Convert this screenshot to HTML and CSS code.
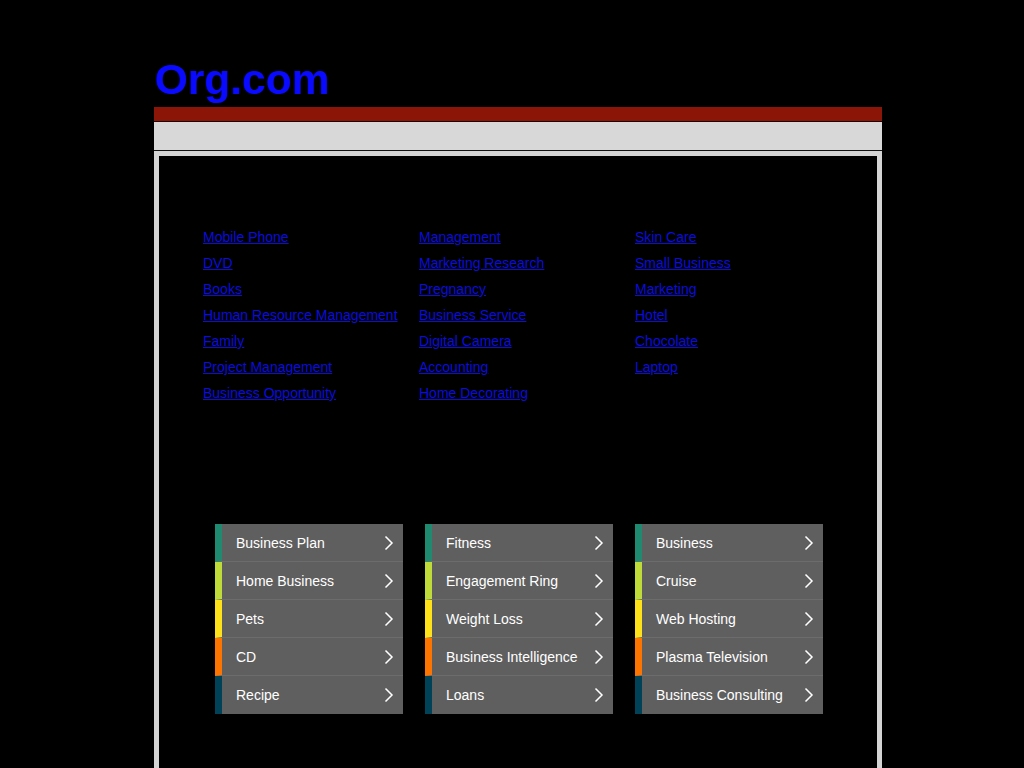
FILE: index.html
```html
<!DOCTYPE html>
<html>
<head>
<meta charset="utf-8">
<title>Org.com</title>
<link rel="stylesheet" href="styles.css">
</head>
<body>
<div class="wrap">
  <div class="logo">Org.com</div>
  <div class="redbar"></div>
  <div class="graybar"></div>
  <div class="box">
    <div class="links">
      <ul class="col">
        <li><a href="#">Mobile Phone</a></li>
        <li><a href="#">DVD</a></li>
        <li><a href="#">Books</a></li>
        <li><a href="#">Human Resource Management</a></li>
        <li><a href="#">Family</a></li>
        <li><a href="#">Project Management</a></li>
        <li><a href="#">Business Opportunity</a></li>
      </ul>
      <ul class="col">
        <li><a href="#">Management</a></li>
        <li><a href="#">Marketing Research</a></li>
        <li><a href="#">Pregnancy</a></li>
        <li><a href="#">Business Service</a></li>
        <li><a href="#">Digital Camera</a></li>
        <li><a href="#">Accounting</a></li>
        <li><a href="#">Home Decorating</a></li>
      </ul>
      <ul class="col">
        <li><a href="#">Skin Care</a></li>
        <li><a href="#">Small Business</a></li>
        <li><a href="#">Marketing</a></li>
        <li><a href="#">Hotel</a></li>
        <li><a href="#">Chocolate</a></li>
        <li><a href="#">Laptop</a></li>
      </ul>
    </div>
    <div class="menus">
      <ul class="menu">
        <li class="c1"><a href="#">Business Plan</a><svg class="chev" viewBox="0 0 10 16"><path d="M1.5 1.5 L8 8 L1.5 14.5" /></svg></li>
        <li class="c2"><a href="#">Home Business</a><svg class="chev" viewBox="0 0 10 16"><path d="M1.5 1.5 L8 8 L1.5 14.5" /></svg></li>
        <li class="c3"><a href="#">Pets</a><svg class="chev" viewBox="0 0 10 16"><path d="M1.5 1.5 L8 8 L1.5 14.5" /></svg></li>
        <li class="c4"><a href="#">CD</a><svg class="chev" viewBox="0 0 10 16"><path d="M1.5 1.5 L8 8 L1.5 14.5" /></svg></li>
        <li class="c5"><a href="#">Recipe</a><svg class="chev" viewBox="0 0 10 16"><path d="M1.5 1.5 L8 8 L1.5 14.5" /></svg></li>
      </ul>
      <ul class="menu">
        <li class="c1"><a href="#">Fitness</a><svg class="chev" viewBox="0 0 10 16"><path d="M1.5 1.5 L8 8 L1.5 14.5" /></svg></li>
        <li class="c2"><a href="#">Engagement Ring</a><svg class="chev" viewBox="0 0 10 16"><path d="M1.5 1.5 L8 8 L1.5 14.5" /></svg></li>
        <li class="c3"><a href="#">Weight Loss</a><svg class="chev" viewBox="0 0 10 16"><path d="M1.5 1.5 L8 8 L1.5 14.5" /></svg></li>
        <li class="c4"><a href="#">Business Intelligence</a><svg class="chev" viewBox="0 0 10 16"><path d="M1.5 1.5 L8 8 L1.5 14.5" /></svg></li>
        <li class="c5"><a href="#">Loans</a><svg class="chev" viewBox="0 0 10 16"><path d="M1.5 1.5 L8 8 L1.5 14.5" /></svg></li>
      </ul>
      <ul class="menu">
        <li class="c1"><a href="#">Business</a><svg class="chev" viewBox="0 0 10 16"><path d="M1.5 1.5 L8 8 L1.5 14.5" /></svg></li>
        <li class="c2"><a href="#">Cruise</a><svg class="chev" viewBox="0 0 10 16"><path d="M1.5 1.5 L8 8 L1.5 14.5" /></svg></li>
        <li class="c3"><a href="#">Web Hosting</a><svg class="chev" viewBox="0 0 10 16"><path d="M1.5 1.5 L8 8 L1.5 14.5" /></svg></li>
        <li class="c4"><a href="#">Plasma Television</a><svg class="chev" viewBox="0 0 10 16"><path d="M1.5 1.5 L8 8 L1.5 14.5" /></svg></li>
        <li class="c5"><a href="#">Business Consulting</a><svg class="chev" viewBox="0 0 10 16"><path d="M1.5 1.5 L8 8 L1.5 14.5" /></svg></li>
      </ul>
    </div>
  </div>
</div>
</body>
</html>
```
FILE: styles.css
```css
html, body {
  margin: 0;
  padding: 0;
  background: #000;
  font-family: "Liberation Sans", Arial, sans-serif;
}
.wrap {
  width: 728px;
  margin-left: 154px;
  padding-top: 56px;
}
.logo {
  font-size: 42.5px;
  font-weight: bold;
  color: #0a0aff;
  line-height: 48px;
  height: 51px;
  padding-left: 1px;
}
.redbar {
  height: 14px;
  background: #8b1506;
  border-bottom: 1px solid #1a0500;
}
.graybar {
  height: 28px;
  background: #d8d8d8;
  border-bottom: 1px solid #111;
}
.box {
  border: 5px solid #d4d4d4;
  background: #000;
  height: 700px;
}
.links {
  display: flex;
  padding: 72px 0 0 44px;
}
.col {
  list-style: none;
  margin: 0;
  padding: 0;
  width: 216px;
}
.col li {
  height: 26px;
  line-height: 18px;
  font-size: 14px;
}
.col a {
  color: #0c0cdd;
  text-decoration: underline;
}
.menus {
  display: flex;
  gap: 22px;
  padding: 114px 0 0 56px;
}
.menu {
  list-style: none;
  margin: 0;
  padding: 0;
  width: 188px;
}
.menu li {
  box-sizing: border-box;
  height: 38px;
  display: flex;
  align-items: center;
  justify-content: space-between;
  background: #5f5f5f;
  border-left: 7px solid #1f8a70;
  border-bottom: 1px solid #6c6c6c;
  padding: 0 9px 0 14px;
  font-size: 14px;
}
.menu li:last-child {
  border-bottom: none;
}
.menu a {
  color: #fff;
  text-decoration: none;
}
.menu .c1 { border-left-color: #1f8a70; }
.menu .c2 { border-left-color: #bedb39; }
.menu .c3 { border-left-color: #ffe11a; }
.menu .c4 { border-left-color: #fd7400; }
.menu .c5 { border-left-color: #004358; }
.chev {
  width: 10px;
  height: 16px;
  fill: none;
  stroke: #fff;
  stroke-width: 1.5;
}
```
